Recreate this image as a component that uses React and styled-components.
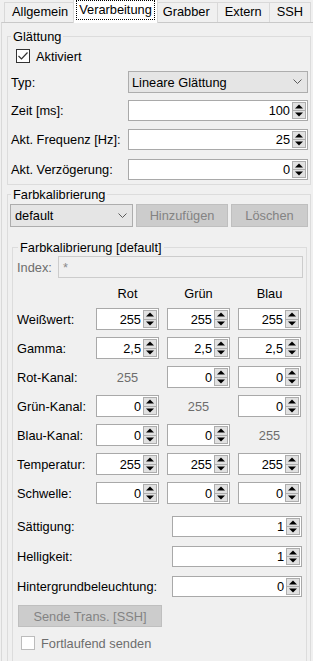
import React from 'react';
import styled, { createGlobalStyle } from 'styled-components';

const GlobalStyle = createGlobalStyle`
	body {
		margin: 0;
		background: #f0f0f0;
		font-family: 'Liberation Sans', Arial, sans-serif;
		font-size: 12.8px;
		color: #000;
	}
`;

const Window = styled.div`
	width: 313px;
	height: 661px;
	overflow: hidden;
	background: #f0f0f0;
`;

const TabBar = styled.div`
	display: flex;
	align-items: flex-end;
	height: 23px;
	padding-left: 4px;
	position: relative;
	z-index: 2;
	margin-bottom: -1px;
`;

const Tab = styled.div`
	position: relative;
	box-sizing: border-box;
	height: ${(p) => (p.$active ? '24px' : '20px')};
	margin: ${(p) => (p.$active ? '0 -2px 0 -3px' : '0 0 1px -1px')};
	padding: ${(p) => (p.$active ? '1px 3px 0' : '0 5px')};
	border: 1px solid #d9d9d9;
	border-bottom: none;
	background: ${(p) => (p.$active ? '#ffffff' : '#f0f0f0')};
	line-height: 18px;
	z-index: ${(p) => (p.$active ? 2 : 1)};
	white-space: nowrap;

	&:first-child {
		margin-left: 0;
	}

	span {
		display: inline-block;
		padding: 0 2px;
		line-height: 18px;
		outline: ${(p) => (p.$active ? '1px dotted #000' : 'none')};
	}
`;

const Pane = styled.div`
	margin-left: 1px;
	border-top: 1px solid #c9c9c9;
	border-left: 1px solid #d9d9d9;
	padding: 6px 2px 0 5px;
	height: 660px;
`;

const Group = styled.fieldset`
	margin: ${(p) => p.$margin || '0'};
	padding: ${(p) => p.$pad || '0 2px 4px 3px'};
	border: 1px solid #dcdcdc;
	min-width: 0;
`;

const Legend = styled.legend`
	padding: 0 2px;
	margin-left: ${(p) => p.$offset || 0}px;
	line-height: 15px;
`;

const CheckRow = styled.label`
	display: flex;
	align-items: center;
	gap: 6px;
	height: 14px;
	margin: ${(p) => p.$margin || '0'};
	color: ${(p) => (p.$disabled ? '#6d6d6d' : '#000')};
`;

const CheckBox = styled.span`
	box-sizing: border-box;
	width: 14px;
	height: 14px;
	display: flex;
	align-items: center;
	justify-content: center;
	background: #fff;
	border: 1px solid ${(p) => (p.$disabled ? '#bcbcbc' : '#333')};
`;

const FormRow = styled.div`
	display: flex;
	align-items: center;
	height: ${(p) => p.$h || 21}px;
	margin-top: ${(p) => p.$top || 8}px;
`;

const Label = styled.div`
	width: ${(p) => (p.$w ? `${p.$w}px` : 'auto')};
	flex: ${(p) => (p.$w ? 'none' : 1)};
	color: ${(p) => (p.$muted ? '#6d6d6d' : '#000')};
	white-space: nowrap;
`;

const Combo = styled.div`
	box-sizing: border-box;
	flex: 1;
	height: 100%;
	display: flex;
	align-items: center;
	justify-content: space-between;
	padding: 0 5px 0 ${(p) => p.$padLeft || 3}px;
	background: #e5e5e5;
	border: 1px solid #adadad;
`;

const Spin = styled.div`
	box-sizing: border-box;
	display: flex;
	width: ${(p) => (p.$w ? `${p.$w}px` : 'auto')};
	flex: ${(p) => (p.$w ? 'none' : 1)};
	height: 100%;
	padding: 1px;
	background: #fff;
	border: 1px solid #a9a9a9;
`;

const SpinValue = styled.div`
	flex: 1;
	display: flex;
	align-items: center;
	justify-content: flex-end;
	padding-right: 2px;
`;

const SpinButtons = styled.div`
	display: flex;
	flex-direction: column;
	width: 14px;
`;

const SpinBtn = styled.div`
	box-sizing: border-box;
	flex: 1;
	display: flex;
	align-items: center;
	justify-content: center;
	background: #e1e1e1;
	border: 1px solid #adadad;

	& + & {
		border-top: none;
	}
`;

const ButtonRow = styled.div`
	display: grid;
	grid-template-columns: 123px 92px 1fr;
	column-gap: 3px;
	height: 23px;
	margin-top: 2px;
`;

const Button = styled.div`
	box-sizing: border-box;
	display: flex;
	align-items: center;
	justify-content: center;
	width: ${(p) => (p.$w ? `${p.$w}px` : 'auto')};
	height: ${(p) => p.$h || 23}px;
	margin: ${(p) => p.$margin || '0'};
	background: #cccccc;
	border: 1px solid #bfbfbf;
	color: #838383;
`;

const TextField = styled.div`
	box-sizing: border-box;
	flex: 1;
	height: 100%;
	display: flex;
	align-items: center;
	padding-left: 4px;
	margin-right: -1px;
	background: #f0f0f0;
	border: 1px solid #cccccc;
	color: #8a8a8a;
`;

const ChannelGrid = styled.div`
	display: grid;
	grid-template-columns: 71px 63px 63px 63px;
	grid-template-rows: 15px repeat(7, 22px);
	column-gap: 8px;
	row-gap: 7px;
	margin-top: 8px;
	align-items: center;
`;

const Header = styled.div`
	text-align: center;
	line-height: 15px;
`;

const FixedValue = styled.div`
	text-align: center;
	color: #6d6d6d;
`;

const Arrow = ({ up }) => (
	<svg width="8" height="5" viewBox="0 0 8 5">
		<polygon points={up ? '0,4.5 4,0.5 8,4.5' : '0,0.5 8,0.5 4,4.5'} fill="#000" />
	</svg>
);

const Chevron = () => (
	<svg width="9" height="6" viewBox="0 0 9 6">
		<polyline points="0.5,0.5 4.5,4.5 8.5,0.5" fill="none" stroke="#5a5a5a" strokeWidth="1" />
	</svg>
);

const SpinBox = ({ value, w }) => (
	<Spin $w={w}>
		<SpinValue>{value}</SpinValue>
		<SpinButtons>
			<SpinBtn>
				<Arrow up />
			</SpinBtn>
			<SpinBtn>
				<Arrow />
			</SpinBtn>
		</SpinButtons>
	</Spin>
);

const channels = [
	{ label: 'Weißwert:', values: ['255', '255', '255'] },
	{ label: 'Gamma:', values: ['2,5', '2,5', '2,5'] },
	{ label: 'Rot-Kanal:', values: [null, '0', '0'] },
	{ label: 'Grün-Kanal:', values: ['0', null, '0'] },
	{ label: 'Blau-Kanal:', values: ['0', '0', null] },
	{ label: 'Temperatur:', values: ['255', '255', '255'] },
	{ label: 'Schwelle:', values: ['0', '0', '0'] },
];

const tabs = ['Allgemein', 'Verarbeitung', 'Grabber', 'Extern', 'SSH'];

export default function App() {
	return (
		<Window>
			<GlobalStyle />
			<TabBar>
				{tabs.map((t) => (
					<Tab key={t} $active={t === 'Verarbeitung'}>
						<span>{t}</span>
					</Tab>
				))}
			</TabBar>
			<Pane>
				<Group>
					<Legend>Glättung</Legend>
					<CheckRow $margin="5px 0 0 5px">
						<CheckBox>
							<svg width="12" height="12" viewBox="0 0 12 12">
								<polyline points="1.5,6 4.5,9 10.5,2.5" fill="none" stroke="#333" strokeWidth="1.2" />
							</svg>
						</CheckBox>
						Aktiviert
					</CheckRow>
					<FormRow $h={22} $top={8}>
						<Label $w={117}>Typ:</Label>
						<Combo>
							Lineare Glättung
							<Chevron />
						</Combo>
					</FormRow>
					<FormRow $top={7}>
						<Label $w={117}>Zeit [ms]:</Label>
						<SpinBox value="100" />
					</FormRow>
					<FormRow $top={8}>
						<Label $w={117}>Akt. Frequenz [Hz]:</Label>
						<SpinBox value="25" />
					</FormRow>
					<FormRow $top={9}>
						<Label $w={117}>Akt. Verzögerung:</Label>
						<SpinBox value="0" />
					</FormRow>
				</Group>

				<Group $margin="2px 0 0" $pad="0 2px 0 2px">
					<Legend $offset={1}>Farbkalibrierung</Legend>
					<ButtonRow>
						<Combo $padLeft={4}>
							default
							<Chevron />
						</Combo>
						<Button>Hinzufügen</Button>
						<Button>Löschen</Button>
					</ButtonRow>

					<Group $margin="13px 1px 0 2px" $pad="0 4px 12px 4px">
						<Legend $offset={1}>Farbkalibrierung [default]</Legend>
						<FormRow $h={22} $top={1}>
							<Label $w={41} $muted>
								Index:
							</Label>
							<TextField>*</TextField>
						</FormRow>

						<ChannelGrid>
							<div />
							<Header>Rot</Header>
							<Header>Grün</Header>
							<Header>Blau</Header>
							{channels.map((row) => (
								<React.Fragment key={row.label}>
									<Label>{row.label}</Label>
									{row.values.map((v, i) =>
										v === null ? <FixedValue key={i}>255</FixedValue> : <SpinBox key={i} value={v} />
									)}
								</React.Fragment>
							))}
						</ChannelGrid>

						<FormRow $top={12}>
							<Label>Sättigung:</Label>
							<SpinBox value="1" w={130} />
						</FormRow>
						<FormRow $top={9}>
							<Label>Helligkeit:</Label>
							<SpinBox value="1" w={130} />
						</FormRow>
						<FormRow $top={9}>
							<Label>Hintergrundbeleuchtung:</Label>
							<SpinBox value="0" w={130} />
						</FormRow>

						<Button $w={144} $h={22} $margin="8px 0 0 1px">
							Sende Trans. [SSH]
						</Button>
						<CheckRow $margin="9px 0 0 4px" $disabled>
							<CheckBox $disabled />
							Fortlaufend senden
						</CheckRow>
					</Group>
				</Group>
			</Pane>
		</Window>
	);
}
